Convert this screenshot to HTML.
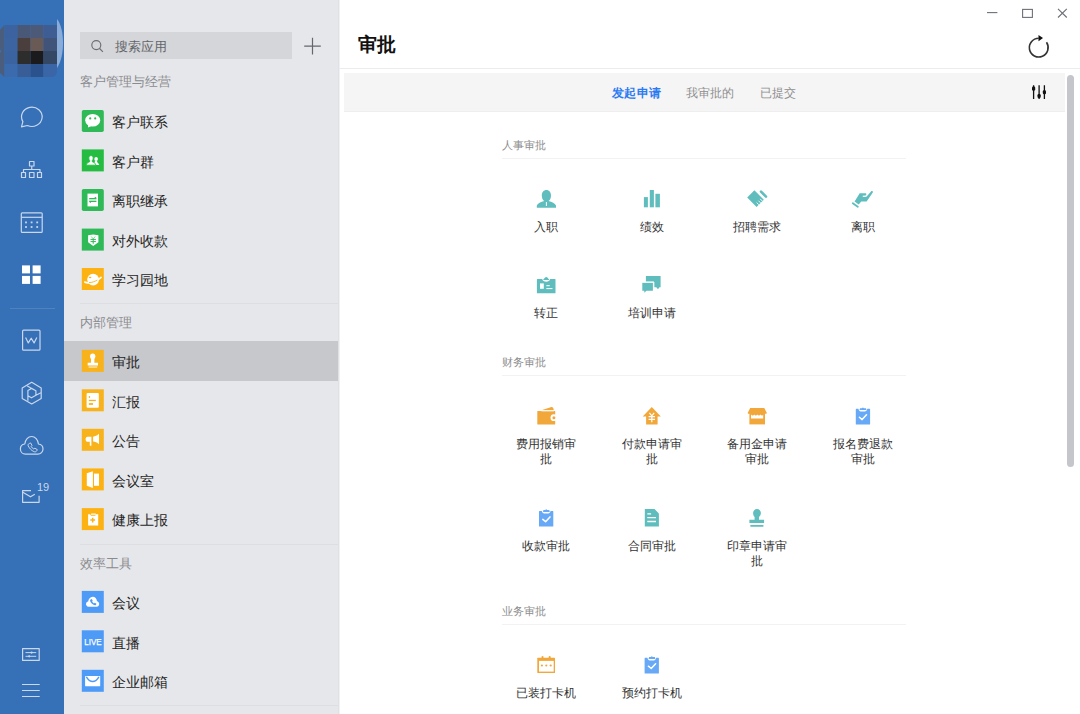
<!DOCTYPE html>
<html><head><meta charset="utf-8">
<style>
*{margin:0;padding:0;box-sizing:border-box}
html,body{width:1080px;height:714px;overflow:hidden;background:#fff;font-family:"Liberation Sans",sans-serif;position:relative}
.a{position:absolute;white-space:nowrap}
#side{left:0;top:0;width:64px;height:714px;background:#3670b7}
#mid{left:64px;top:0;width:275px;height:714px;background:#e6e7ea;border-right:1px solid #e0e1e5;box-shadow:1px 0 0 #f0f1f3}
.sh{font-size:13px;line-height:13px;color:#8a8b8f;left:80px}
.tx{font-size:14px;line-height:14px;color:#1f1f1f;left:112px}
.dv{left:80px;width:258px;height:1px;background:#dddee1}
.sec{font-size:11px;line-height:11px;color:#8d8d8d;left:502px}
.sl{left:502px;width:404px;height:1px;background:#f2f2f2}
.lb{font-size:12px;line-height:15px;color:#333;width:66px;text-align:center;white-space:normal}
svg{position:absolute;left:0;top:0}
</style></head><body>
<div id="side" class="a"></div>
<div id="mid" class="a"></div>
<!-- search -->
<div class="a" style="left:80px;top:32px;width:212px;height:26.5px;background:#d5d6d9"></div>
<div class="a" style="left:114.5px;top:39.5px;font-size:13px;line-height:13px;color:#636569">搜索应用</div>
<!-- section headers middle -->
<div class="a sh" style="top:75px">客户管理与经营</div>
<div class="a tx" style="top:115px">客户联系</div>
<div class="a tx" style="top:154.5px">客户群</div>
<div class="a tx" style="top:194px">离职继承</div>
<div class="a tx" style="top:233.5px">对外收款</div>
<div class="a tx" style="top:273px">学习园地</div>
<div class="a dv" style="top:303px"></div>
<div class="a sh" style="top:316px">内部管理</div>
<div class="a" style="left:64px;top:341px;width:274px;height:39.5px;background:#c6c8cc"></div>
<div class="a tx" style="top:355px">审批</div>
<div class="a tx" style="top:394.5px">汇报</div>
<div class="a tx" style="top:434px">公告</div>
<div class="a tx" style="top:473.5px">会议室</div>
<div class="a tx" style="top:513px">健康上报</div>
<div class="a dv" style="top:544px"></div>
<div class="a sh" style="top:556.5px">效率工具</div>
<div class="a tx" style="top:596px">会议</div>
<div class="a tx" style="top:635.5px">直播</div>
<div class="a tx" style="top:675px">企业邮箱</div>
<div class="a dv" style="top:705px"></div>
<!-- main header -->
<div class="a" style="left:358px;top:35px;font-size:19px;line-height:19px;font-weight:bold;color:#111">审批</div>
<div class="a" style="left:339px;top:68px;width:741px;height:1px;background:#eaecef"></div>
<div class="a" style="left:344px;top:73px;width:721px;height:39px;background:#f5f5f5;border-bottom:1px solid #eeeeee"></div>
<div class="a" style="left:612px;top:87px;font-size:12px;line-height:12px;font-weight:bold;color:#2d7bf2;letter-spacing:0.3px">发起申请</div>
<div class="a" style="left:686px;top:87px;font-size:12px;line-height:12px;color:#8f8f8f">我审批的</div>
<div class="a" style="left:760px;top:87px;font-size:12px;line-height:12px;color:#8f8f8f">已提交</div>
<div class="a" style="left:1067px;top:75px;width:7px;height:392px;background:#c4c6cc;border-radius:3.5px"></div>
<!-- content -->
<div class="a sec" style="top:140px">人事审批</div>
<div class="a sl" style="top:158px"></div>
<div class="a lb" style="left:513px;top:220px">入职</div>
<div class="a lb" style="left:619px;top:220px">绩效</div>
<div class="a lb" style="left:724px;top:220px">招聘需求</div>
<div class="a lb" style="left:830px;top:220px">离职</div>
<div class="a lb" style="left:513px;top:306px">转正</div>
<div class="a lb" style="left:619px;top:306px">培训申请</div>
<div class="a sec" style="top:357px">财务审批</div>
<div class="a sl" style="top:375px"></div>
<div class="a lb" style="left:513px;top:437px">费用报销审批</div>
<div class="a lb" style="left:619px;top:437px">付款申请审批</div>
<div class="a lb" style="left:724px;top:437px">备用金申请审批</div>
<div class="a lb" style="left:830px;top:437px">报名费退款审批</div>
<div class="a lb" style="left:513px;top:539px">收款审批</div>
<div class="a lb" style="left:619px;top:539px">合同审批</div>
<div class="a lb" style="left:724px;top:539px">印章申请审批</div>
<div class="a sec" style="top:606px">业务审批</div>
<div class="a sl" style="top:624px"></div>
<div class="a lb" style="left:513px;top:686px">已装打卡机</div>
<div class="a lb" style="left:619px;top:686px">预约打卡机</div>
<div class="a" style="left:37px;top:482px;font-size:11px;line-height:11px;color:#c9d8ef">19</div>
<svg width="1080" height="714" viewBox="0 0 1080 714">
<!-- ICONS -->
<!-- avatar -->
<g>
<path d="M0,29.7 L4.5,25.2 V77.3 L0,72.8 V53 L1.5,51.3 L0,49.6 Z" fill="#4a5d7c"/>
<path d="M57,19 C61,24 63,33 63,43 C63,53 61,62 57,68 Z" fill="#8aacd9"/>
<rect x="4.5" y="25" width="13" height="13" fill="#3c63a0"/>
<rect x="17.5" y="25" width="13" height="13" fill="#4a5878"/>
<rect x="30.5" y="25" width="13" height="13" fill="#4c5a77"/>
<rect x="43.5" y="25" width="13.5" height="13" fill="#3e5e93"/>
<rect x="4.5" y="38" width="13" height="13" fill="#3b64a0"/>
<rect x="17.5" y="38" width="13" height="13" fill="#4a3f3d"/>
<rect x="30.5" y="38" width="13" height="13" fill="#6a5a56"/>
<rect x="43.5" y="38" width="13.5" height="13" fill="#3f5478"/>
<rect x="4.5" y="51" width="13" height="13" fill="#3b63a0"/>
<rect x="17.5" y="51" width="13" height="13" fill="#2e2d2d"/>
<rect x="30.5" y="51" width="13" height="13" fill="#1b1a1c"/>
<rect x="43.5" y="51" width="13.5" height="13" fill="#344866"/>
<rect x="4.5" y="64" width="13" height="13" fill="#3b6aad"/>
<rect x="17.5" y="64" width="13" height="13" fill="#395d97"/>
<rect x="30.5" y="64" width="13" height="13" fill="#2b528c"/>
<path d="M43.5,64 H57 V72 Q56,77 52,77 H43.5 Z" fill="#3a66a8"/>
</g>
<g fill="none" stroke="#c9d8ee" stroke-width="1.2" stroke-linejoin="round">
<path d="M22.9,121.6 A10.3,9.6 0 1 1 27.4,125.5 L21.5,126.8 Z"/>
<rect x="29.5" y="161.5" width="4.5" height="4.5"/>
<path d="M31.75,166 V169.5 M23.5,172.5 V169.5 H40 V172.5"/>
<rect x="21.5" y="172.5" width="4" height="5"/>
<rect x="29.5" y="172.5" width="4.5" height="5"/>
<rect x="37.5" y="172.5" width="4" height="5"/>
<rect x="21.3" y="212.9" width="20.9" height="19.4" rx="0.9"/>
<path d="M21.3,217.3 H42.2"/>
<rect x="22.6" y="330.2" width="17.4" height="20" rx="1"/>
<path d="M25.6,337.4 L28.3,342.9 L31.2,338.2 L34.1,342.9 L36.8,337.4"/>
<path d="M31.7,382.3 L41.2,387.9 L41.2,398.4 L31.7,404 L22.2,398.4 L22.2,387.9 Z"/>
<path d="M31.5,388.4 L35.9,390.8 L35.9,395.3 L31.5,397.8 L27.9,395.7 L27.9,390.5 Z M27.1,385.8 L31.5,388.4 M40.9,392.8 L35.9,395.3 M27.9,395.7 L27.9,400.8"/>
<path d="M25.5,454.2 C22.5,454.2 20.4,451.8 20.4,449 C20.4,446.3 22.3,444.3 24.8,444 C25.3,439.7 28.1,436.5 31.6,436.5 C35.1,436.5 38,439.7 38.4,444 C41.1,444.3 43,446.4 43,449 C43,451.8 40.8,454.2 37.8,454.2 Z"/>
<path d="M29.3,443.5 L30.6,442.9 L32,445.4 L31.1,446.3 C31.7,447.6 32.6,448.5 33.9,449.1 L34.8,448.2 L37.3,449.6 L36.7,450.9 C36.1,451.9 34.9,452.1 33.9,451.6 C31.4,450.4 29.5,448.5 28.3,446 C27.8,445 28.2,443.9 29.3,443.5 Z" stroke-width="1"/>
<path d="M31,490.6 H22.6 V502.3 H39.1 V495.8"/>
<path d="M22.8,492.2 L30.5,496.8 L34.8,494.2"/>
<rect x="22.6" y="648.6" width="16.6" height="11.8"/>
<path d="M25.5,652.6 H36.2 M25.5,656.3 H36.2" stroke-width="1"/>
<path d="M22,684.5 H39.7 M22,690.5 H39.7 M22,696.5 H39.7"/>
</g>
<g fill="#c9d8ee">
<rect x="25.1" y="221.5" width="1.8" height="1.8"/><rect x="30.7" y="221.5" width="1.8" height="1.8"/><rect x="36.3" y="221.5" width="1.8" height="1.8"/>
<rect x="25.1" y="226.1" width="1.8" height="1.8"/><rect x="30.7" y="226.1" width="1.8" height="1.8"/><rect x="36.3" y="226.1" width="1.8" height="1.8"/>
<circle cx="31.6" cy="652.6" r="1.1"/><circle cx="29.2" cy="656.3" r="1.1"/>
</g>
<g fill="#fff">
<rect x="22" y="265.4" width="8" height="8"/><rect x="32.6" y="265.4" width="8" height="8"/>
<rect x="22" y="275.9" width="8" height="8"/><rect x="32.6" y="275.9" width="8" height="8"/>
</g>
<rect x="10" y="308" width="45" height="1" fill="#fff" fill-opacity="0.13"/>
<!-- search + plus -->
<g fill="none" stroke="#6c6e73" stroke-width="1.15">
<circle cx="96.3" cy="45.1" r="4.5"/>
<path d="M99.6,48.5 L102.9,51.8"/>
</g>
<path d="M312.5,37.8 V54.4 M304.2,46.1 H320.8" stroke="#63676e" stroke-width="1.2" fill="none"/>
<!-- 1 客户联系 -->
<g transform="translate(81.8,110)">
<rect width="22" height="22" rx="1.8" fill="#2fb957"/>
<ellipse cx="10.9" cy="10.3" rx="7.5" ry="6.3" fill="#fff"/>
<path d="M6.2,14.5 L6.3,17.6 L10.2,15.8 Z" fill="#fff"/>
<circle cx="8.4" cy="8.4" r="1.1" fill="#2fb957"/><circle cx="13.4" cy="8.4" r="1.1" fill="#2fb957"/>
</g>
<!-- 2 客户群 -->
<g transform="translate(81.8,149.4)">
<rect width="22" height="22" fill="#24bd42"/>
<ellipse cx="14.3" cy="9.7" rx="1.8" ry="2" fill="#fff"/>
<path d="M13.3,11.4 H15.3 V12.9 L16.1,13.3 L17.6,15.7 H12 Z" fill="#fff"/>
<path d="M9.2,6.2 C10.6,6.2 11.4,7.3 11.4,8.7 C11.4,9.8 11,10.7 10.5,11.1 V12.4 C12,12.8 13.3,13.6 14.3,15.8 H4.1 C5.1,13.6 6.4,12.8 7.9,12.4 V11.1 C7.4,10.7 7,9.8 7,8.7 C7,7.3 7.8,6.2 9.2,6.2 Z" fill="#fff" stroke="#24bd42" stroke-width="0.9"/>
</g>
<!-- 3 离职继承 -->
<g transform="translate(81.8,189)">
<rect width="22" height="22" rx="1.8" fill="#2fb957"/>
<rect x="5.7" y="4.6" width="10.5" height="12.8" fill="#fff"/>
<rect x="7.4" y="9.6" width="7.2" height="2.6" fill="#bfe8c9"/><path d="M7.4,9.4 H14.6 M14.6,9.4 L13,8.3 M14.6,12.4 H7.4 M7.4,12.4 L9,13.5" stroke="#2fb957" stroke-width="1.05" fill="none"/>
</g>
<!-- 4 对外收款 -->
<g transform="translate(81.8,228.6)">
<rect width="22" height="22" fill="#2fb957"/>
<path d="M6.3,6.6 L11.4,5.8 L16.6,6.6 L16.6,13.6 L11.4,17.4 L6.3,13.6 Z" fill="#fff"/>
<path d="M9.4,7.9 L11.4,10.2 L13.4,7.9" stroke="#7fd398" stroke-width="1" fill="none"/><path d="M8.7,10.8 H14.1 M8.7,13 H14.1 M11.4,10.2 V15.2" stroke="#2fb957" stroke-width="1" fill="none"/>
</g>
<!-- 5 学习园地 -->
<g transform="translate(81.8,268)">
<rect width="22" height="22" fill="#fdb213"/>
<circle cx="11.3" cy="11.6" r="5.9" fill="#fff"/>
<path d="M3,14 C5,15.5 9,15 13,13.3 C16,12 18.6,10.3 19.3,9.3" stroke="#fff" stroke-width="1.6" fill="none" stroke-linecap="round"/>
<path d="M7.2,14.6 C10,14.6 13,13.6 15.5,12" stroke="#fdb213" stroke-width="0.9" fill="none"/>
<ellipse cx="8.3" cy="9.5" rx="1.3" ry="0.7" fill="#fdb213"/>
</g>
<!-- 6 审批 -->
<g transform="translate(81.8,349.9)">
<rect width="22" height="22" fill="#f8b31c"/>
<path d="M10.9,3.5 C12.6,3.5 13.6,4.8 13.6,6.4 C13.6,7.7 13,8.5 12.6,9.1 L12.6,12.8 L16.2,12.8 L16.2,15.6 L5.9,15.6 L5.9,12.8 L9.2,12.8 L9.2,9.1 C8.8,8.5 8.2,7.7 8.2,6.4 C8.2,4.8 9.2,3.5 10.9,3.5 Z" fill="#fff"/>
<rect x="6.8" y="16.4" width="8.6" height="1.5" fill="#fff" fill-opacity="0.6"/>
</g>
<!-- 7 汇报 -->
<g transform="translate(81.8,389.3)">
<rect width="22" height="22" fill="#f8b31c"/>
<rect x="4.8" y="3.8" width="12.2" height="14.7" rx="1" fill="#fff"/>
<rect x="7" y="6.6" width="1.3" height="2" rx="0.6" fill="#f8b31c"/>
<rect x="7" y="10.5" width="7" height="1.3" fill="#f8b31c"/>
<rect x="7" y="13.8" width="4.2" height="1.8" fill="#f8b31c"/>
</g>
<!-- 8 公告 -->
<g transform="translate(81.8,428.8)">
<rect width="22" height="22" fill="#f8b31c"/>
<path d="M5.8,7.9 L9.6,7.9 L9.6,17 L8,17 L8,13 L5.8,13 C4.5,13 3.8,11.8 3.8,10.4 C3.8,9.1 4.5,7.9 5.8,7.9 Z" fill="#fff"/>
<path d="M11.3,7.9 C13.3,7.6 15.3,6.8 17.2,5 L17.2,15.4 C15.3,13.8 13.3,13 11.3,12.8 Z" fill="#fff"/>
</g>
<!-- 9 会议室 -->
<g transform="translate(81.8,468.4)">
<rect width="22" height="22" fill="#fdb213"/>
<path d="M5,4.8 L11.1,2.9 L11.1,19.5 L5,17.4 Z" fill="#fff"/>
<rect x="12.2" y="5.2" width="5" height="12.2" fill="#fff"/>
</g>
<!-- 10 健康上报 -->
<g transform="translate(81.8,508.1)">
<rect width="22" height="22" fill="#fdb213"/>
<path d="M6.3,6.2 L8.3,6.2 L9.2,7.6 L13.4,7.6 L14.3,6.2 L16.4,6.2 L16.4,17.3 L6.3,17.3 Z" fill="#fff"/>
<rect x="9.2" y="5.5" width="5" height="1.2" rx="0.5" fill="#fff"/>
<path d="M10.9,9.6 V14.4 M8.5,12 H13.3" stroke="#fdb213" stroke-width="1.5"/>
</g>
<!-- 11 会议 -->
<g transform="translate(81.8,590.9)">
<rect width="22" height="22" fill="#4e9bf7"/>
<path d="M6.6,15.8 C5.2,15.8 4.2,14.7 4.2,13.2 C4.2,11.8 5.2,10.8 6.4,10.6 C6.6,8 8.5,5.8 10.9,5.8 C13.2,5.8 15,7.7 15.2,10.3 C16.4,10.6 17.4,11.7 17.4,13.1 C17.4,14.6 16.3,15.8 14.9,15.8 Z" fill="#fff"/>
<path d="M8.9,8.6 L10,8.1 L10.9,9.9 L10.3,10.6 C10.7,11.4 11.4,12.1 12.2,12.5 L12.9,11.9 L14.7,12.8 L14.2,13.8 C13.7,14.4 12.9,14.5 12.2,14.2 C10.5,13.4 9.2,12.1 8.4,10.4 C8.1,9.7 8.3,8.9 8.9,8.6 Z" fill="#4e9bf7"/>
</g>
<!-- 12 直播 -->
<g transform="translate(81.8,630.3)">
<rect width="22" height="22" fill="#4e9bf7"/>
<text x="11.1" y="14.4" font-family="Liberation Sans" font-weight="normal" font-size="9" fill="#fff" stroke="#fff" stroke-width="0.25" text-anchor="middle" textLength="17.4" lengthAdjust="spacingAndGlyphs">LIVE</text>
</g>
<!-- 13 企业邮箱 -->
<g transform="translate(81.8,669.8)">
<rect width="22" height="22" fill="#4e9bf7"/>
<rect x="3.3" y="6.1" width="15.1" height="10.4" rx="0.6" fill="#fff"/>
<path d="M4.9,7.5 Q7.6,11.7 10.85,11.7 Q14.1,11.7 16.8,7.5" stroke="#4e9bf7" stroke-width="1.5" fill="none" stroke-linecap="round"/>
</g>
<!-- window controls -->
<g fill="none" stroke="#6d7078" stroke-width="1.1">
<path d="M987,12.6 H997.4"/>
<rect x="1022.6" y="9.4" width="9.8" height="8"/>
<path d="M1058,8.8 L1066.8,17.5 M1066.8,8.8 L1058,17.5"/>
</g>
<!-- refresh -->
<path d="M1046.5,42.3 A9.4,9.4 0 1 1 1038.7,38.2" fill="none" stroke="#333" stroke-width="1.6"/>
<path d="M1038.5,35 L1043,38.1 L1038.5,41.2 Z" fill="#111"/>
<!-- filter -->
<g stroke="#111" stroke-width="1.3" fill="none">
<path d="M1033.6,85.3 V98.9 M1039.1,85.3 V98.9 M1044.4,85.3 V98.9"/>
</g>
<g fill="#111">
<rect x="1032" y="86.6" width="3.2" height="4" rx="1.2"/>
<rect x="1037.5" y="94" width="3.2" height="4" rx="1.2"/>
<rect x="1042.8" y="90.2" width="3.2" height="4" rx="1.2"/>
</g>
<!-- teal icons -->
<g fill="#5fbdbd">
<!-- 入职 -->
<path d="M546.4,190 C549,190 551,192.2 551,195.4 C551,198 550,200 548.5,201.1 C552,201.8 555,203.3 556,205.6 L556,207.8 L536.8,207.8 L536.8,205.6 C537.8,203.3 540.8,201.8 544.3,201.1 C542.8,200 541.8,198 541.8,195.4 C541.8,192.2 543.8,190 546.4,190 Z"/>
<!-- 绩效 -->
<rect x="643.9" y="197.1" width="4" height="10.2"/>
<rect x="649.8" y="190" width="4.1" height="17.3"/>
<rect x="655.4" y="193.8" width="4.5" height="13.5"/>
<!-- 招聘需求 -->
<path d="M747.2,197.6 L754.4,190.3 L763.8,199.7 L756.6,207 Z"/>
<path d="M761,191.6 L766,196.6" stroke="#5fbdbd" stroke-width="2.6" stroke-linecap="round"/>
<!-- 离职 -->
<path d="M854.6,201.4 L859.7,193.3 L865.6,193.2 C866.5,193.3 866.6,195.2 865.7,195.5 L862.6,195.8 C862.4,196.5 862.8,196.9 863.5,196.9 L866.4,196.7 L871,191.4 C871.8,190.6 873.4,191.4 872.8,192.5 L866.6,201.5 L861.2,201.6 L858.7,204.4 Z"/>
<path d="M852.8,203.3 L857.8,206.8" stroke="#5fbdbd" stroke-width="1.8" stroke-linecap="round"/>
<!-- 转正 -->
<path d="M537.4,279 H542.2 C542.6,280.8 544.2,281.8 546.2,281.8 C548.2,281.8 549.8,280.8 550.2,279 H555 Q555.5,279 555.5,279.5 V292.8 Q555.5,293.3 555,293.3 H537.4 Q536.9,293.3 536.9,292.8 V279.5 Q536.9,279 537.4,279 Z"/>
<path d="M543,279.9 L545,277.6 Q546.2,276.6 547.4,277.6 L549.5,279.9 Z"/>
<!-- 培训申请 -->
<path d="M645.9,276.1 H660.6 V287.2 L659.4,287.2 L658,289.2 L656.3,287.2 L653.9,287.2 V281.8 H645.9 Z"/>
<path d="M642.3,282.8 H652.9 V290.8 H646.4 L644.3,292.8 L644.3,290.8 L642.3,290.8 Z"/>
<!-- 合同审批 -->
<path d="M644.8,509 H654.5 L658.9,513.4 V526.5 H644.8 Z"/>
<!-- 印章 -->
<path d="M757,509 C759.3,509 760.9,510.7 760.9,513 C760.9,515 759.8,516.2 759,517 L759,519.7 L764.1,519.7 L764.1,523.1 L749.4,523.1 L749.4,519.7 L754.6,519.7 L754.6,517 C753.8,516.2 753.1,515 753.1,513 C753.1,510.7 754.7,509 757,509 Z"/>
<rect x="750.2" y="525" width="13.4" height="1.7" rx="0.8"/>
</g>
<g stroke="#fff" fill="none">
<path d="M546.4,202 L546.4,206" stroke-width="1" />
<path d="M762.4,201.1 L760.2,198.9 M760.6,202.9 L758.4,200.7 M758.8,204.7 L756.6,202.5" stroke-width="0.9"/>
<path d="M647.3,513.9 H651.1 M647.3,517.6 H656 M647.3,521.5 H656" stroke-width="1.3"/>
</g>
<g fill="#fff">
<rect x="540" y="283.4" width="3.8" height="5.4"/>
<rect x="546.3" y="285.2" width="3.5" height="1"/>
<rect x="546.3" y="288.1" width="6.2" height="1"/>
</g>
<path d="M653.9,282.8 V281.8" stroke="#fff" stroke-width="0"/>
<path d="M642.3,282 H653.9 V291" stroke="#fff" stroke-width="0.9" fill="none"/>
<!-- orange -->
<g fill="#f2a73a">
<!-- wallet -->
<path d="M537.8,411.1 H554.7 Q555.2,411.1 555.2,411.6 V424.1 Q555.2,424.6 554.7,424.6 H537.8 Q537.3,424.6 537.3,424.1 V411.6 Q537.3,411.1 537.8,411.1 Z"/>
<path d="M541.5,410.2 L551.3,407.1 Q553.4,406.8 553.8,410.2 Z"/>
<!-- house -->
<path d="M651.8,407.1 L660.8,416.6 L657.6,416.6 L657.6,424.6 L646.1,424.6 L646.1,416.6 L642.7,416.6 Z"/>
<!-- store -->
<path d="M750.2,408 H764.3 L766.6,412.6 V413.7 H747.9 V412.6 Z"/>
<rect x="749.4" y="413" width="15.6" height="11.4"/>
<!-- calendar -->
<path d="M537.8,657.8 H554.5 Q555,657.8 555,658.3 V672.6 Q555,673.1 554.5,673.1 H537.8 Q537.3,673.1 537.3,672.6 V658.3 Q537.3,657.8 537.8,657.8 Z"/>
<rect x="541.5" y="655.9" width="2" height="3" rx="1"/>
<rect x="548.7" y="655.9" width="2" height="3" rx="1"/>
</g>
<circle cx="553.9" cy="417.7" r="3.4" fill="#fff"/>
<circle cx="553.9" cy="417.7" r="1.5" fill="#f2a73a"/>
<path d="M649.4,412.9 L651.8,415.8 L654.2,412.9 M648.6,416.6 H655 M648.6,419.3 H655 M651.8,415.8 V422.2" stroke="#fff" stroke-width="1.2" fill="none"/>
<path d="M541.4,410.9 H553.9" stroke="#fff" stroke-width="0.9"/>
<rect x="751" y="414.6" width="12.2" height="3.9" fill="#fff"/>
<g fill="#f2a73a"><circle cx="752.7" cy="414.3" r="1.2"/><circle cx="755.8" cy="414.3" r="1.2"/><circle cx="758.9" cy="414.3" r="1.2"/><circle cx="762" cy="414.3" r="1.2"/></g>
<rect x="539" y="660.9" width="14.7" height="10.7" fill="#fff"/>
<g fill="#f2a73a"><circle cx="541.9" cy="665.5" r="1.1"/><circle cx="546.3" cy="665.5" r="1.1"/><circle cx="550.7" cy="665.5" r="1.1"/></g>
<!-- blue clipboards -->
<g fill="#67a9f7">
<path d="M856.3,408.8 H858.4 C858.8,410.4 859.6,411.4 860.8,411.4 H864.9 C866.1,411.4 866.9,410.4 867.3,408.8 H869.6 Q870.1,408.8 870.1,409.3 V424.1 Q870.1,424.6 869.6,424.6 H856.3 Q855.8,424.6 855.8,424.1 V409.3 Q855.8,408.8 856.3,408.8 Z"/>
<path d="M859.5,410.1 L860,408.2 H862 Q862.9,406.8 863.8,408.2 H866 L866.4,410.1 Z"/>
<path d="M539.5,510.9 H541.8 C542.2,512.4 543,513.4 544.2,513.4 H548.2 C549.4,513.4 550.2,512.4 550.6,510.9 H552.8 Q553.3,510.9 553.3,511.4 V526 Q553.3,526.5 552.8,526.5 H539.5 Q539,526.5 539,526 V511.4 Q539,510.9 539.5,510.9 Z"/>
<path d="M543,512.1 L543.4,510 H545.3 Q546.2,508.6 547.1,510 H549.3 L549.8,512.1 Z"/>
<path d="M645.1,657.8 H647.4 C647.8,659.4 648.6,660.4 649.8,660.4 H653.8 C655,660.4 655.8,659.4 656.2,657.8 H658.4 Q658.9,657.8 658.9,658.3 V673 Q658.9,673.5 658.4,673.5 H645.1 Q644.6,673.5 644.6,673 V658.3 Q644.6,657.8 645.1,657.8 Z"/>
<path d="M648.6,659.1 L649,657 H650.9 Q651.8,655.6 652.7,657 H654.9 L655.3,659.1 Z"/>
</g>
<g stroke="#fff" stroke-width="1.5" fill="none" stroke-linecap="round" stroke-linejoin="round">
<path d="M859.4,417.3 L862.1,419.6 L866.5,414.8"/>
<path d="M542.8,519.4 L545.6,521.7 L550,516.9"/>
<path d="M648.4,666.2 L651.2,668.5 L655.6,663.7"/>
</g>

</svg>
</body></html>
